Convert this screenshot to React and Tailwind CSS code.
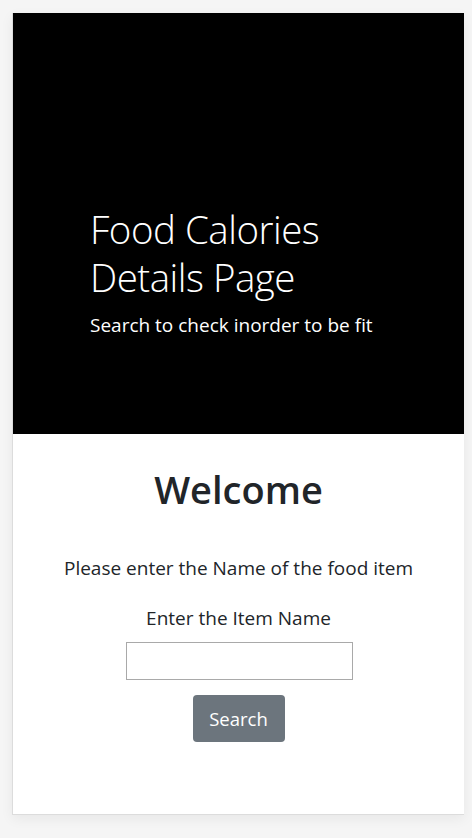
import React from "react";

export default function App() {
  return (
    <div className="min-h-[838px] bg-[#f5f5f5] pt-[13px] pl-[12px] pr-[8px] font-['Open_Sans','Noto_Sans',sans-serif]">
      <div className="w-[452px] border-l border-b border-[#dcdcdc] bg-white shadow-[0_4px_12px_rgba(0,0,0,0.06)]">
        {/* Hero */}
        <div className="h-[421px] bg-black pl-[77px] pt-[192px] text-white">
          <h1 className="text-[38.5px] font-light leading-[48px] tracking-[-0.5px]">
            Food Calories
            <br />
            Details Page
          </h1>
          <p className="mt-[10px] text-[19px] leading-[28px]">Search to check inorder to be fit</p>
        </div>

        {/* Search section */}
        <div className="flex h-[380px] flex-col items-center pt-[31px] text-[#212529]">
          <h2 className="text-[38px] font-semibold leading-[48px]">Welcome</h2>
          <p className="mt-[41px] text-[19px] leading-[28px]">Please enter the Name of the food item</p>
          <label className="mt-[22px] text-[19px] leading-[28px]" htmlFor="item">
            Enter the Item Name
          </label>
          <input id="item" type="text" className="ml-[2px] mt-[10px] h-[38px] w-[227px] border border-[#a9a9a9] bg-white" />
          <button className="mt-[15px] h-[47px] w-[92px] rounded-[4px] bg-[#6c757d] text-[18.5px] text-white">
            Search
          </button>
        </div>
      </div>
    </div>
  );
}
